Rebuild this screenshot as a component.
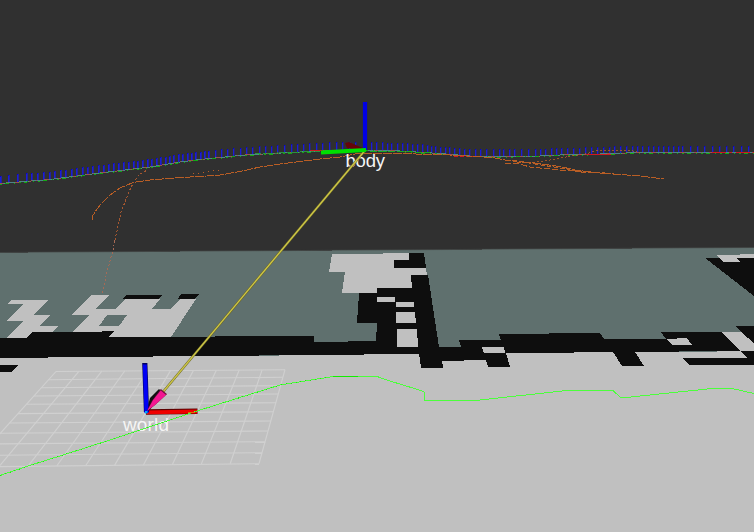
import React from "react";

type Pt = [number, number];

const BLACK = "#0e0e0e";
const LIGHT = "#c0c0c0";
const TEAL = "#5f706e";

// Map cells, painted from the far wall towards the floor.
const cells: { fill: string; points: string }[] = [
  { fill: TEAL, points: "0,252.7 754,247.7 754,380 0,380" },
  { fill: LIGHT, points: "0,357.5 48,357.5 48,357 153,356.5 258,356 300,355 364,354 419,353.5 574,352.5 679,352 754,351 754,532 0,532" },
  { fill: BLACK, points: "0,338 26,338 32,332 102,332 102,331 114,331 109,337 215,336.5 215,336 314,336 314,342 348,342 348,341 376,341 377,323 357,323 359,293.5 377,293 377,288 412,288 411,275 428,275 439,347 461,347 459,340 501,340 499,334 549,334 549,333 600,333 604,339 666,339 661,332 754,332 754,351 740,351 679,351 679,352 635,352 644,366 622,366 613,352 574,352 574,353 506,353 510,367 488,367 486,360 464,360 464,361 442,361 443,367.5 421,367.5 419,354 364,354 364,355 259,355 259,356 153,356 153,357 48,357 48,358 0,358" },
  { fill: LIGHT, points: "12,300 49,300 33,315 51,315 39,326 58,326 52,332 32,332 26,338 6,338 24,321 6,321 23,304 7,304" },
  { fill: LIGHT, points: "91,295 109,295 95,309.5 115,309 125,299 160,299 152,309 171,309 180,299 196,299 171,337 109,337 114,331 102,331 102,332 73,332 89,315 71,315" },
  { fill: TEAL, points: "107,315 127,315 119,326 99,326" },
  { fill: BLACK, points: "126,295 162,295 159,299 123,299" },
  { fill: BLACK, points: "181,294 199,294 195,299 178,299" },
  { fill: BLACK, points: "0,365 18,365 11,372 0,372" },
  { fill: LIGHT, points: "332,254 383,254 383,253 409,253 409,268 426,268 427,275 411,275 412,288 377,288 377,293 342,293 345,272 329,272" },
  { fill: BLACK, points: "409,253 424,253 426,268 394,268 394,260 409,260" },
  { fill: LIGHT, points: "377,297 395,297 395,302 377,302" },
  { fill: LIGHT, points: "396,302 414,302 414,307 396,307" },
  { fill: LIGHT, points: "396,312 415,312 416,323 396,323" },
  { fill: LIGHT, points: "397,329 417,329 418,347 397,347" },
  { fill: LIGHT, points: "482,347 504,347 505,353 484,353" },
  { fill: BLACK, points: "705,258 754,258 754,296" },
  { fill: LIGHT, points: "716,255 740,255 740,254 754,254 754,258 736,258 740,262 724,262" },
  { fill: LIGHT, points: "666,339 677,339 677,338 687,338 692,345 672,345" },
  { fill: BLACK, points: "735,326 754,326 754,345 741,332" },
  { fill: LIGHT, points: "721,332 741,332 754,343 754,351 740,351" },
  { fill: BLACK, points: "740,351 754,351 754,365 690,365 690,366 683,358 748,358" },
];

const track: Pt[] = [
  [0, 183.5], [50, 179.5], [100, 173], [150, 167], [180, 162], [200, 159.5], [245, 155],
  [300, 152], [325, 150.5], [365, 150], [400, 151], [440, 153.5], [470, 156], [500, 156.5],
  [540, 156], [560, 155], [600, 154], [640, 152.5], [754, 152.5],
];

const ticks = [
  0, 8, 17, 26, 31, 37, 43, 49, 54, 60, 65, 71, 76, 82, 87, 92, 98, 103, 108, 113, 118, 123, 128,
  133, 137, 142, 147, 151, 156, 160, 165, 169, 173, 178, 182, 187, 191, 195, 200, 204, 208, 215,
  221, 227, 233, 240, 246, 252, 259, 265, 271, 277, 284, 291, 297, 303, 309, 316, 322, 329, 336,
  342, 349, 355, 371, 376, 382, 387, 391, 397, 402, 407, 412, 417, 422, 427, 431, 435, 440, 445,
  449, 454, 459, 464, 469, 475, 480, 486, 493, 499, 503, 509, 514, 521, 528, 535, 540, 545, 551,
  556, 561, 567, 573, 579, 585, 591, 597, 603, 609, 614, 620, 626, 632, 637, 642, 648, 653, 658,
  663, 668, 673, 678, 682, 690, 697, 704, 712, 719, 726, 733, 741, 748,
];

function trackY(x: number) {
  for (let i = 1; i < track.length; i++) {
    const [x0, y0] = track[i - 1];
    const [x1, y1] = track[i];
    if (x <= x1) return y0 + ((y1 - y0) * (x - x0)) / (x1 - x0);
  }
  return track[track.length - 1][1];
}

const line = (pts: Pt[]) => pts.map((p) => p.join(",")).join(" ");

// Horizontal grid rows: y at the left edge and at the right edge.
const rowLeft = [371.5, 379.7, 387.7, 396, 404.3, 413.6, 423, 433.3, 444, 455.5, 467];
const rowRight = [369.7, 377.3, 385.7, 394, 402.7, 411.7, 421, 431, 441.7, 452.7, 463.7];

function Grid() {
  return (
    <g stroke="#d0d0d0" strokeWidth="1.1" fill="none">
      {rowLeft.map((y, i) => {
        const t = (y - 371.5) / 95.5;
        return <line key={`r${i}`} x1={56 - 86 * t} y1={y} x2={285 - 26 * t} y2={rowRight[i]} />;
      })}
      {rowLeft.map((_, i) => (
        <line key={`c${i}`} x1={56 + 22.9 * i} y1={371.5 - 0.18 * i} x2={-30 + 28.9 * i} y2={467 - 0.33 * i} />
      ))}
    </g>
  );
}

function Trajectory() {
  const pts = line(track);
  return (
    <g shapeRendering="crispEdges" fill="none">
      {ticks.map((x) => {
        const y = trackY(x);
        const h = x < 430 ? 8 : 7;
        const top = Math.round(y - h);
        return (
          <g key={x}>
            <rect x={x} y={top} width="2" height={h} fill="#2020b4" fillOpacity={x < 210 ? 0.85 : 0.45} />
            <rect x={x} y={top} width="1" height={h} fill="#1c1cd8" />
            <rect x={x} y={top} width="1" height="1" fill="#0404c8" />
          </g>
        );
      })}
      <polyline points={pts} stroke="#4d8587" />
      <polyline points={pts} stroke="#9b5052" strokeDasharray="3 4 1 7 5 9" />
      <polyline points={pts} stroke="#14a914" strokeDasharray="2 3 4 5 1 4" transform="translate(0 .7)" />
      <polyline points="255,154 300,152 320,151" stroke="#299440" strokeDasharray="6 2 3 1" />
      <polyline points="370,151 399,151 430,153" stroke="#18aa22" strokeDasharray="7 2" />
      <g stroke="#d01820">
        <polyline points="310,150.5 323,150.5" />
        <polyline points="454,156.5 480,156.5" strokeDasharray="4 2" />
        <polyline points="586,154.5 611,154.5" />
        <polyline points="712,152.5 754,152.5" strokeDasharray="14 3 3 4" />
      </g>
    </g>
  );
}

function Scans() {
  return (
    <g stroke="#b95e25" fill="none" shapeRendering="crispEdges">
      <polyline points="92,220 92,217 95,212 101,204 110,195 120,188 133,182.5 150,180 180,177.5 200,176.5 220,175 240,171.5 260,167 280,164 300,161.5 320,159 340,157 355,154 370,153.5 399,153.5 450,155 492,157.5 505,160 520,162.5 535,163 560,166.5 575,170 600,173 640,176 664,179" strokeDasharray="9 1" />
      <polyline points="115,240 118,226 121,212 125,202 131,187 138,176 143,172 148,170" strokeDasharray="2 2" stroke="#a5572f" />
      <polyline points="102,293 104,285 107,272 110,261 113,250 115,240" strokeDasharray="2 2" stroke="#a66a55" />
      <polyline points="505,163.5 518,163.5 530,167 560,170 585,171.5 608,174" strokeDasharray="6 2" />
      <polyline points="512,160 535,164 560,168 580,172 605,172" strokeDasharray="5 2" />
      <polyline points="525,163 545,161 560,158 572,156 585,154 600,150 630,150 640,153" strokeDasharray="2 2" strokeWidth=".8" />
      <polyline points="193,174 207,172 219,170" strokeDasharray="1 4" />
    </g>
  );
}

export default function App() {
  return (
    <main className="h-[532px] w-[754px] overflow-hidden bg-[#303030]">
      <svg className="block" width="754" height="532" viewBox="0 0 754 532">
        <g shapeRendering="crispEdges">
          {cells.map((c, i) => (
            <polygon key={i} points={c.points} fill={c.fill} />
          ))}
        </g>
        <line x1="0" y1="252.5" x2="754" y2="247.5" stroke="#494f4e" strokeWidth=".7" />
        <Grid />
        <Trajectory />
        <Scans />

        {/* World frame */}
        <polygon points="159,389 150,398 147,409 149,411 163,393" fill="#111" />
        <line x1="146" y1="412" x2="197.5" y2="411.2" stroke="#5b0000" strokeWidth="5.4" />
        <line x1="147" y1="412.3" x2="197" y2="411.5" stroke="#f00000" strokeWidth="3.8" />
        <line x1="144.8" y1="363" x2="146.5" y2="412" stroke="#000060" strokeWidth="5.2" />
        <line x1="144.8" y1="364.5" x2="146.5" y2="413" stroke="#0000f5" strokeWidth="4" />
        <rect x="145" y="411" width="2.5" height="2.5" fill="#00a8ff" />

        {/* Body frame */}
        <path d="M345 143l4-1 16 7v2l-18-3z" fill="#660508" />
        <path d="M365 102v48" stroke="#0000e4" strokeWidth="4.2" />

        <text x="345.5" y="167" textLength="39.5" className="fill-[#f5f5f5] font-['Liberation_Sans',sans-serif] text-[18.5px]">body</text>

        <line x1="364.5" y1="151" x2="163" y2="392" stroke="#696524" strokeWidth="2.4" />
        <line x1="364.5" y1="151" x2="163" y2="392" stroke="#cdc647" strokeWidth="1.4" />
        <path d="M321 152.6L366 150" stroke="#00df00" strokeWidth="4" />
        <polygon points="147,411 151,402 160,389.5 166.5,394.5 155,405" fill="#4d0b30" />
        <polygon points="147,411 153,400 161,390 166.5,394.5 155,405" fill="#f31691" />
        <path d="M160.5 389.5L166.5 394.5" stroke="#74103f" strokeWidth="1.2" />

        <text x="123" y="431" textLength="46" className="fill-[#f5f5f5] font-['Liberation_Sans',sans-serif] text-[19px]">world</text>

        {/* Ground path */}
        <g fill="none" shapeRendering="crispEdges">
          <polyline points="0,475.5 28,466 63,455 110,440 197,411 235,399 280,385 330,377 377,376.5 390,381 424,391.5 425,400.5 475,400.5 567,390.5 613,390.5 621,398 712,388.5 732,388.5 754,393.5" stroke="#4cff3c" />
          <polyline points="333,376.5 358,376.5" stroke="#12ed00" />
          <polyline points="0,475.5 63,455 110,440 197,411 280,385 330,377" stroke="#20e60e" strokeDasharray="1 4" />
        </g>
        <path d="M188 412.5h7" stroke="#e36c00" />
      </svg>
    </main>
  );
}
